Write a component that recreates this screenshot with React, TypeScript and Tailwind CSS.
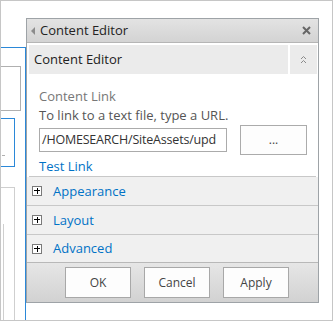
import React from "react";

const font = { fontFamily: "'Open Sans', 'Noto Sans', sans-serif" };

function PlusBox() {
  return (
    <span className="relative block h-[10px] w-[10px] shrink-0 border border-[#7a7a7a] bg-white">
      <span className="absolute left-[1px] top-[3px] h-px w-[6px] bg-black" />
      <span className="absolute left-[3.5px] top-[1px] h-[6px] w-px bg-black" />
    </span>
  );
}

function Row({ label, last }: { label: string; last?: boolean }) {
  return (
    <div
      className={
        last
          ? "flex h-[27px] items-center bg-[#f0f0f0] pl-[5px]"
          : "flex h-[29px] items-center border-b border-[#c8c8c8] bg-[#f0f0f0] pl-[5px]"
      }
    >
      <PlusBox />
      <span className="ml-[11px] pt-[1px] text-[13px] text-[#0072c6]">{label}</span>
    </div>
  );
}

function FooterButton({ label }: { label: string }) {
  return (
    <button className="h-[31px] w-[66px] border border-[#a8a8a8] bg-[#fdfdfd] text-[12px] text-[#444]">
      {label}
    </button>
  );
}

export default function App() {
  return (
    <div
      style={font}
      className="flex h-[321px] w-[333px] overflow-hidden border border-[#c6c6c6] bg-white"
    >
      {/* page content behind the tool pane */}
      <div className="flex w-[25px] shrink-0 flex-col">
        <div className="h-[46px] shrink-0" />
        <div className="flex flex-1 flex-col border-r border-t border-[#2b88d8]">
          <div className="h-[18px] shrink-0" />
          <div className="h-[45px] w-[20px] shrink-0 border-y border-r border-[#b0b0b0]" />
          <div className="h-[7px] shrink-0" />
          <div className="relative h-[49px] w-[14px] shrink-0 border-y border-r border-[#2b88d8]">
            <span className="absolute left-[1px] top-[36px] h-px w-[3px] bg-[#b0b0b0]" />
          </div>
          <div className="h-[20px] shrink-0" />
          <div className="relative w-[14px] flex-1 border-r border-t border-[#cfcfcf]">
            <span className="absolute bottom-0 left-[2px] top-[36px] w-px bg-[#cfcfcf]" />
          </div>
        </div>
      </div>

      {/* tool pane */}
      <div className="flex w-[293px] shrink-0 flex-col pt-[17px]">
        <div className="flex flex-col border border-[#9ea3a7]">
          <div className="flex h-[24px] items-center border-b border-[#b5b5b5] bg-gradient-to-b from-[#e3e3e3] to-[#d3d3d3] pl-[4px] pr-[7px]">
            <span className="h-0 w-0 border-y-[4px] border-r-[4px] border-y-transparent border-r-[#8c8c8c]" />
            <span className="ml-[5px] flex-1 text-[13px] text-[#222]">Content Editor</span>
            <svg width="9" height="9" viewBox="0 0 9 9">
              <path d="M1 1 L8 8 M8 1 L1 8" stroke="#666" strokeWidth="2" />
            </svg>
          </div>

          <div className="flex gap-[2px] bg-white pl-[2px] pr-[1px] pt-[2px]">
            <div className="flex h-[29px] flex-1 items-center bg-[#ebebeb] pl-[5px] text-[13px] text-[#222]">
              Content Editor
            </div>
            <div className="flex h-[29px] w-[27px] items-center justify-center bg-[#ebebeb]">
              <svg width="7" height="9" viewBox="0 0 7 9">
                <path d="M1 4 L3.5 1.5 L6 4 M1 8 L3.5 5.5 L6 8" stroke="#8a8a8a" strokeWidth="1" fill="none" />
              </svg>
            </div>
          </div>

          <div className="flex flex-col bg-white pl-[12px] pt-[13px]">
            <span className="text-[13px] leading-[18px] text-[#777]">Content Link</span>
            <span className="mt-[1px] text-[13px] leading-[18px] text-[#555]">
              To link to a text file, type a URL.
            </span>
            <div className="mt-[1px] flex h-[30px] items-center">
              <div className="flex h-[24px] w-[188px] items-center overflow-hidden whitespace-nowrap border border-[#ababab] pl-[2px] text-[12.5px] tracking-[-0.2px] text-[#333]">
                /HOMESEARCH/SiteAssets/upd
              </div>
              <button className="ml-[13px] h-[30px] w-[67px] border border-[#ababab] bg-[#fdfdfd] text-[12px] leading-none text-[#444]">
                ...
              </button>
            </div>
            <span className="mt-[2px] pb-[1px] text-[13px] leading-[18px] text-[#0072c6]">Test Link</span>
          </div>
          <div className="mx-[2px] border-b border-[#c8c8c8]" />

          <Row label="Appearance" />
          <Row label="Layout" />
          <Row label="Advanced" last />

          <div className="flex h-[40px] items-center gap-[13px] border-t border-[#b8b8b8] bg-gradient-to-b from-[#e6e6e6] to-[#d2d2d2] pl-[38px]">
            <FooterButton label="OK" />
            <FooterButton label="Cancel" />
            <FooterButton label="Apply" />
          </div>
        </div>
      </div>
    </div>
  );
}
